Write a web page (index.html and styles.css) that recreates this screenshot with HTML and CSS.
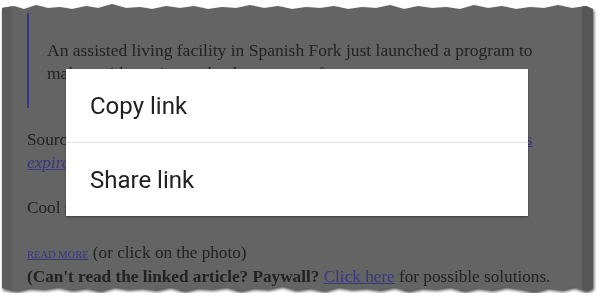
FILE: index.html
```html
<!DOCTYPE html>
<html lang="en">
<head>
    <meta charset="UTF-8">
    <meta name="viewport" content="width=device-width, initial-scale=1.0">
    <title>Tesla rides for seniors</title>
    <link rel="stylesheet" href="styles.css">
</head>
<body>

    <div class="frame">
        <div class="paper">
            <div class="edge edge-left"></div>

            <div class="post">
                <blockquote>
                    An assisted living facility in Spanish Fork just launched a program to
                    make resident trips to the doctor more fun.
                </blockquote>
                <p>Source: KSL.com, Utah seniors get to ride around town in style, with <a href="#">this</a>
                    <a href="#"><em>expires soon</em></a></p>
                <p>Cool stuff.</p>
                <p>
                    <a href="#" class="more">READ MORE</a> (or click on the photo)<br>
                    <b>(Can't read the linked article? Paywall?</b> <a href="#">Click here</a> for possible solutions.
                </p>
            </div>

            <div class="edge edge-right"></div>

            <!-- 공유 메뉴 -->
            <div class="menu">
                <div class="menu-item">Copy link</div>
                <div class="menu-item">Share link</div>
            </div>
        </div>
    </div>

</body>
</html>
```

FILE: styles.css
```css
body {
    margin: 0;
    background-color: #ffffff;
}

/* 찢어진 종이 모양 */
.frame {
    margin: 3px 0 0 2px;
    width: 591px;
    filter: drop-shadow(1px 2px 1.5px rgba(0, 0, 0, 0.7));
}
.paper {
    position: relative;
    display: flex;
    height: 290px;
    background-color: #646464;
    overflow: hidden;
    clip-path: polygon(
        0 5px, 12px 3px, 22px 6px, 34px 2px, 46px 5px, 58px 4px, 70px 6px, 84px 3px,
        96px 5px, 110px 1px, 124px 5px, 138px 4px, 150px 6px, 164px 3px, 178px 5px,
        192px 3px, 206px 6px, 220px 4px, 234px 5px, 248px 2px, 262px 5px, 276px 3px,
        290px 6px, 304px 4px, 318px 5px, 332px 3px, 346px 6px, 360px 4px, 374px 5px,
        388px 2px, 402px 6px, 416px 3px, 430px 5px, 444px 4px, 458px 6px, 472px 2px,
        486px 5px, 500px 3px, 514px 6px, 528px 4px, 542px 5px, 556px 2px, 570px 5px,
        584px 3px, 100% 6px,
        100% calc(100% - 5px), 584px calc(100% - 2px), 572px calc(100% - 6px),
        560px calc(100% - 3px), 546px calc(100% - 5px), 532px calc(100% - 1px),
        518px calc(100% - 4px), 504px calc(100% - 6px), 490px calc(100% - 3px),
        476px calc(100% - 5px), 462px calc(100% - 2px), 448px calc(100% - 6px),
        434px calc(100% - 4px), 420px calc(100% - 5px), 406px calc(100% - 2px),
        392px calc(100% - 6px), 378px calc(100% - 3px), 364px calc(100% - 5px),
        350px calc(100% - 4px), 336px calc(100% - 6px), 322px calc(100% - 2px),
        308px calc(100% - 5px), 294px calc(100% - 3px), 280px calc(100% - 7px),
        266px calc(100% - 4px), 252px calc(100% - 5px), 238px calc(100% - 2px),
        224px calc(100% - 6px), 210px calc(100% - 4px), 196px calc(100% - 5px),
        182px calc(100% - 2px), 168px calc(100% - 6px), 154px calc(100% - 3px),
        140px calc(100% - 5px), 126px calc(100% - 4px), 112px calc(100% - 6px),
        98px calc(100% - 2px), 84px calc(100% - 5px), 70px calc(100% - 3px),
        56px calc(100% - 6px), 42px calc(100% - 4px), 28px calc(100% - 5px),
        14px calc(100% - 2px), 0 calc(100% - 5px)
    );
}
.edge {
    flex: none;
}
.edge-left {
    width: 10px;
    background-color: #5c5c5c;
}
.edge-right {
    width: 11px;
    background-color: #575757;
}

/* 본문 (어둡게 덮인 상태) */
.post {
    flex: 1;
    padding: 10px 22px 0 15px;
    font-family: "Liberation Serif", serif;
    font-size: 17.2px;
    line-height: 22.5px;
    color: #222222;
}
blockquote {
    margin: 0 20px 21px 0;
    padding: 26px 0 24px 18px;
    border-left: 2px solid #3a358a;
    font-size: 17.5px;
}
p {
    margin: 0 0 22.5px 0;
}
a {
    color: #3b3684;
}
.more {
    font-size: 10.5px;
}

/* 공유 메뉴 */
.menu {
    position: absolute;
    left: 64px;
    top: 66px;
    width: 462px;
    background-color: #ffffff;
    box-shadow: 0 1px 2px rgba(0, 0, 0, 0.4);
    font-family: Roboto, sans-serif;
    font-size: 24px;
    color: #212121;
}
.menu-item {
    display: flex;
    align-items: center;
    height: 73px;
    padding-left: 24px;
}
.menu-item + .menu-item {
    border-top: 1px solid #e4e4e4;
}
```
